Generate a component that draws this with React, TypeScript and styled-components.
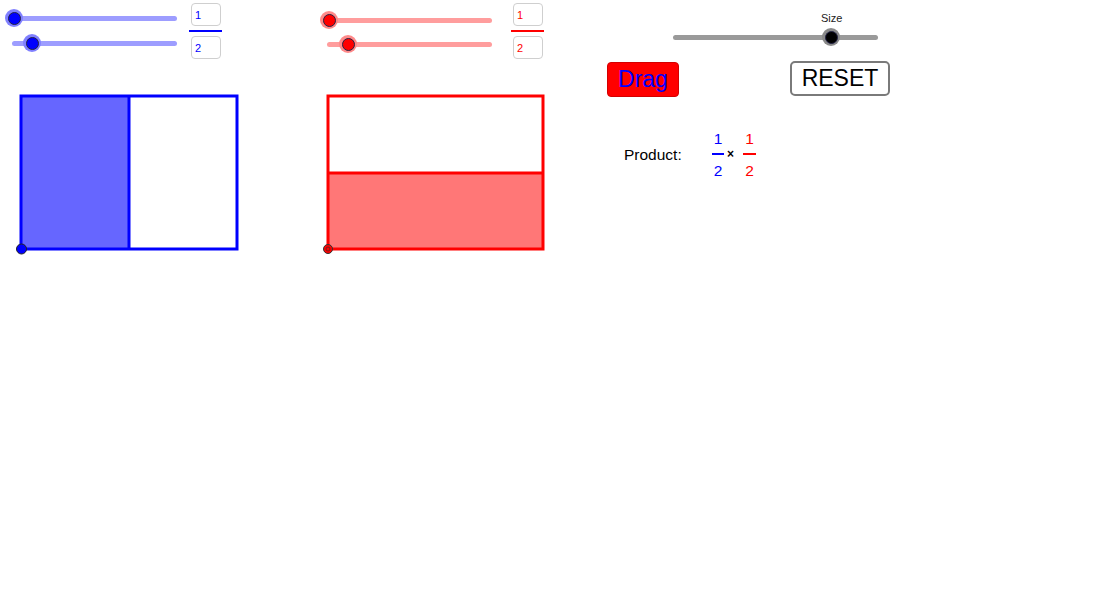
import React from 'react';
import styled, { createGlobalStyle } from 'styled-components';

const GlobalStyle = createGlobalStyle`
    html, body {
        margin: 0;
        padding: 0;
        background: #fff;
    }
    body {
        font-family: 'Liberation Sans', Arial, sans-serif;
    }
`;

const Page = styled.div`
    width: 1117px;
    height: 616px;
    display: flex;
    align-items: flex-start;
    background: #fff;
    overflow: hidden;
`;

const FractionPanel = styled.div<{ width: number }>`
    width: ${(p) => p.width}px;
    display: flex;
    flex-direction: column;
    flex-shrink: 0;
`;

const Controls = styled.div`
    display: flex;
    align-items: flex-start;
    height: 62px;
`;

const SliderStack = styled.div<{ width: number; top: number; gap: number }>`
    width: ${(p) => p.width}px;
    display: flex;
    flex-direction: column;
    gap: ${(p) => p.gap}px;
    padding-top: ${(p) => p.top}px;
`;

const SliderRoot = styled.div`
    position: relative;
    height: 24px;
    display: flex;
    align-items: center;
`;

const Track = styled.div<{ start: number; length: number; color: string }>`
    margin-left: ${(p) => p.start}px;
    width: ${(p) => p.length}px;
    height: 5px;
    border-radius: 3px;
    background: ${(p) => p.color};
`;

const Knob = styled.div<{ halo: string; fill: string }>`
    position: absolute;
    top: 3px;
    width: 18px;
    height: 18px;
    border-radius: 50%;
    background: ${(p) => p.halo};
    display: flex;
    align-items: center;
    justify-content: center;

    &::after {
        content: '';
        width: 11px;
        height: 11px;
        border-radius: 50%;
        background: ${(p) => p.fill};
        border: 1px solid #222244;
    }
`;

const FractionInputs = styled.div`
    width: 33px;
    display: flex;
    flex-direction: column;
    padding-top: 3px;
`;

const NumberBox = styled.div<{ color: string }>`
    margin-left: 2px;
    width: 30px;
    height: 23px;
    box-sizing: border-box;
    border: 1px solid #cfcfcf;
    border-radius: 4px;
    background: #fff;
    color: ${(p) => p.color};
    font-size: 11px;
    line-height: 23px;
    padding-left: 3px;
`;

const InputBar = styled.div<{ color: string }>`
    height: 2px;
    margin: 4px 0;
    background: ${(p) => p.color};
`;

const Diagram = styled.svg`
    display: block;
    margin-top: 26px;
`;

const RightPanel = styled.div`
    display: flex;
    flex-direction: column;
    padding-top: 12px;
`;

const SizeLabel = styled.div`
    font-size: 11px;
    line-height: 13px;
    color: #222;
    padding-left: 221px;
`;

const ButtonRow = styled.div`
    display: flex;
    align-items: flex-start;
    margin-top: 12px;
    padding-left: 7px;
`;

const DragButton = styled.div`
    margin-top: 1px;
    width: 72px;
    height: 35px;
    box-sizing: border-box;
    border: 1px solid #d40000;
    border-radius: 4px;
    background: #ff0000;
    color: #0000ff;
    font-size: 23px;
    line-height: 33px;
    text-align: center;
`;

const ResetButton = styled.div`
    margin-left: 111px;
    width: 100px;
    height: 35px;
    box-sizing: border-box;
    border: 2px solid #7a7a7a;
    border-radius: 5px;
    background: #fff;
    color: #000;
    font-size: 23px;
    line-height: 31px;
    text-align: center;
`;

const ProductRow = styled.div`
    display: flex;
    align-items: center;
    margin-top: 33px;
    padding-left: 24px;
`;

const ProductLabel = styled.div`
    font-size: 15.5px;
    color: #000;
    width: 88px;
    padding-top: 1px;
`;

const Fraction = styled.div<{ color: string; width: number }>`
    width: ${(p) => p.width}px;
    display: flex;
    flex-direction: column;
    align-items: center;
    color: ${(p) => p.color};
    font-size: 15.5px;
    line-height: 17px;
`;

const FractionBar = styled.div<{ color: string }>`
    align-self: stretch;
    height: 2px;
    margin: 6px 0 7px;
    background: ${(p) => p.color};
`;

const Times = styled.div`
    font-size: 12px;
    font-weight: bold;
    color: #000;
    margin: 0 9px 0 3px;
    padding-bottom: 1px;
`;

interface SliderProps {
    start: number;
    length: number;
    knob: number;
    track: string;
    halo: string;
    fill: string;
}

const Slider = ({ start, length, knob, track, halo, fill }: SliderProps) => (
    <SliderRoot>
        <Track start={start} length={length} color={track} />
        <Knob halo={halo} fill={fill} style={{ left: knob - 9 }} />
    </SliderRoot>
);

const App = () => {
    return (
        <>
            <GlobalStyle />
            <Page>
                <FractionPanel width={310}>
                    <Controls>
                        <SliderStack width={189} top={6} gap={1}>
                            <Slider start={12} length={165} knob={14} track="#9d9dff" halo="#8080ff" fill="#0000ff" />
                            <Slider start={12} length={165} knob={32} track="#9d9dff" halo="#8080ff" fill="#0000ff" />
                        </SliderStack>
                        <FractionInputs>
                            <NumberBox color="#0000ff">1</NumberBox>
                            <InputBar color="#0000ff" />
                            <NumberBox color="#0000ff">2</NumberBox>
                        </FractionInputs>
                    </Controls>
                    <Diagram width={250} height={170} viewBox="0 88 250 170">
                        <rect x={21} y={96} width={108} height={153} fill="#6666ff" />
                        <rect x={21} y={96} width={216} height={153} fill="none" stroke="#0000ff" strokeWidth={3} />
                        <line x1={129} y1={96} x2={129} y2={249} stroke="#0000ff" strokeWidth={3} />
                        <circle cx={21.5} cy={249} r={5} fill="#0000ff" stroke="#222" strokeWidth={1} />
                    </Diagram>
                </FractionPanel>

                <FractionPanel width={290}>
                    <Controls>
                        <SliderStack width={201} top={8} gap={-1}>
                            <Slider start={16} length={166} knob={19} track="#ff9d9d" halo="#ff8a8a" fill="#ff0000" />
                            <Slider start={17} length={165} knob={38} track="#ff9d9d" halo="#ff8a8a" fill="#ff0000" />
                        </SliderStack>
                        <FractionInputs>
                            <NumberBox color="#ff0000">1</NumberBox>
                            <InputBar color="#ff0000" />
                            <NumberBox color="#ff0000">2</NumberBox>
                        </FractionInputs>
                    </Controls>
                    <Diagram width={250} height={170} viewBox="310 88 250 170">
                        <rect x={328} y={173} width={215} height={76} fill="#ff7777" />
                        <rect x={328} y={96} width={215} height={153} fill="none" stroke="#ff0000" strokeWidth={3} />
                        <line x1={328} y1={173} x2={543} y2={173} stroke="#ff0000" strokeWidth={3} />
                        <circle cx={328} cy={249} r={4.5} fill="#ff0000" stroke="#333" strokeWidth={1} />
                        <circle cx={328} cy={249} r={2} fill="none" stroke="#552222" strokeWidth={0.8} />
                    </Diagram>
                </FractionPanel>

                <RightPanel>
                    <SizeLabel>Size</SizeLabel>
                    <Slider start={73} length={205} knob={231} track="#9a9a9a" halo="#8a8a8a" fill="#000" />
                    <ButtonRow>
                        <DragButton>Drag</DragButton>
                        <ResetButton>RESET</ResetButton>
                    </ButtonRow>
                    <ProductRow>
                        <ProductLabel>Product:</ProductLabel>
                        <Fraction color="#0000ff" width={12}>
                            <span>1</span>
                            <FractionBar color="#0000ff" />
                            <span>2</span>
                        </Fraction>
                        <Times>×</Times>
                        <Fraction color="#ff0000" width={13}>
                            <span>1</span>
                            <FractionBar color="#ff0000" />
                            <span>2</span>
                        </Fraction>
                    </ProductRow>
                </RightPanel>
            </Page>
        </>
    );
};

export default App;
